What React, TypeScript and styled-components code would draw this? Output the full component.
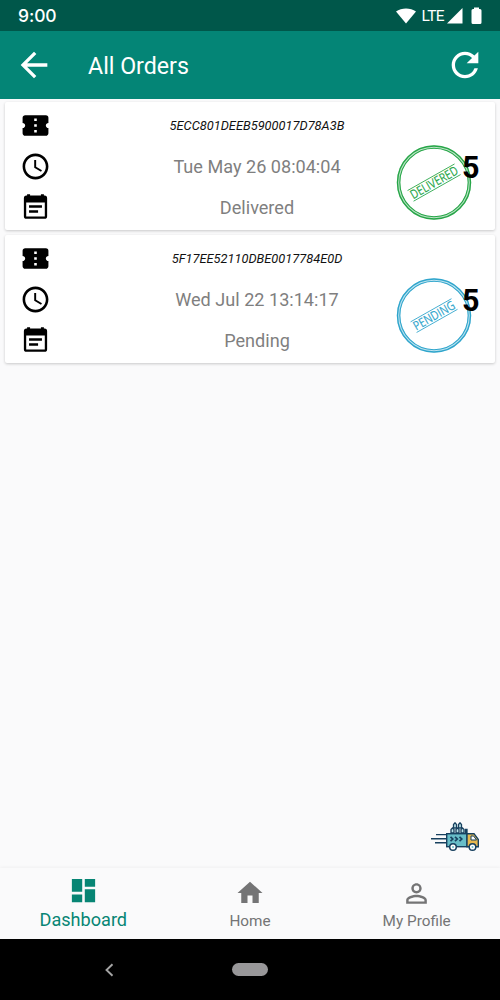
import React from "react";
import styled, { createGlobalStyle } from "styled-components";
import {
  MdArrowBack,
  MdRefresh,
  MdConfirmationNumber,
  MdAccessTime,
  MdDashboard,
  MdHome,
  MdPersonOutline,
} from "react-icons/md";

const GlobalStyle = createGlobalStyle`
  * { box-sizing: border-box; }
  body { margin: 0; background: #fafafc; }
  svg { display: block; flex: none; }
`;

const Screen = styled.div`
  display: flex;
  flex-direction: column;
  width: 500px;
  height: 1000px;
  overflow: hidden;
  background: #fafafb;
  font-family: Roboto, sans-serif;
`;

const StatusBar = styled.div`
  display: flex;
  align-items: center;
  height: 31px;
  flex: none;
  padding: 0 18px;
  background: #00574a;
  color: #fff;
`;

const Clock = styled.span`
  flex: 1;
  font: 500 17.5px/30px Inter, sans-serif;
  letter-spacing: -0.1px;
`;

const Network = styled.span`
  margin: 0 3px 0 5px;
  font-size: 15.5px;
  line-height: 30px;
  letter-spacing: -0.6px;
`;

const AppBar = styled.header`
  display: flex;
  align-items: center;
  height: 68px;
  flex: none;
  padding: 0 15px 0 14px;
  background: #048576;
  color: #fff;
`;

const Title = styled.h1`
  flex: 1;
  margin: 2px 0 0 34px;
  font-size: 23.2px;
  font-weight: 400;
  line-height: 30px;
`;

const Orders = styled.main`
  display: flex;
  flex: 1;
  flex-direction: column;
  gap: 5px;
  padding: 3px 5px;
`;

const Card = styled.article`
  display: grid;
  grid-template-columns: 60px 1fr 122px;
  height: 128px;
  flex: none;
  border-radius: 2px;
  background: #fff;
  box-shadow: 0 1px 3px rgba(0, 0, 0, 0.2);
`;

const IconColumn = styled.div`
  display: flex;
  flex-direction: column;
  align-items: center;
  gap: 10px;
  padding-top: 8px;
  color: #000;
`;

const Details = styled.div`
  display: flex;
  flex-direction: column;
  align-items: center;
  padding: 3px 0 0 76px;
`;

const Line = styled.div<{ $id?: boolean }>`
  height: 41px;
  line-height: 41px;
  white-space: nowrap;
  font-size: ${(p) => (p.$id ? "12.8px" : "18.1px")};
  font-style: ${(p) => (p.$id ? "italic" : "normal")};
  color: ${(p) => (p.$id ? "#111" : "#7f7f7f")};
`;

const StampArea = styled.div`
  position: relative;
  padding: 42px 0 0 23px;
`;

const Quantity = styled.span`
  position: absolute;
  left: 89px;
  top: 48px;
  font-size: 30.5px;
  font-weight: 700;
  line-height: 36px;
  color: #000;
`;

const TruckSlot = styled.div`
  display: flex;
  justify-content: flex-end;
  height: 49px;
  flex: none;
  padding: 3px 19px 0 0;
`;

const NavBar = styled.nav`
  display: grid;
  grid-template-columns: repeat(3, 1fr);
  height: 71px;
  flex: none;
  background: #fafafb;
  box-shadow: 0 -1px 3px rgba(0, 0, 0, 0.045);
`;

const NavItem = styled.div<{ $active?: boolean }>`
  display: flex;
  flex-direction: column;
  align-items: center;
  padding-top: ${(p) => (p.$active ? 7 : 10)}px;
  color: ${(p) => (p.$active ? "#078574" : "#747475")};
  font-size: ${(p) => (p.$active ? 18.1 : 15.3)}px;
`;

const NavLabel = styled.span<{ $active?: boolean }>`
  display: flex;
  align-items: center;
  height: ${(p) => (p.$active ? 28 : 26)}px;
`;

const IconBox = styled.div`
  display: flex;
  align-items: center;
  height: 30px;
`;

const SystemBar = styled.footer`
  display: grid;
  grid-template-columns: 217px 65px 1fr;
  align-items: center;
  justify-items: center;
  height: 61px;
  flex: none;
  background: #000;
`;

const HomePill = styled.div`
  width: 36px;
  height: 13px;
  border-radius: 7px;
  background: #989799;
`;

interface Order {
  id: string;
  date: string;
  status: string;
  color: string;
  half: number;
  quantity: number;
}

const orders: Order[] = [
  { id: "5ECC801DEEB5900017D78A3B", date: "Tue May 26 08:04:04", status: "Delivered", color: "#27a648", half: 27, quantity: 5 },
  { id: "5F17EE52110DBE0017784E0D", date: "Wed Jul 22 13:14:17", status: "Pending", color: "#2fa5cc", half: 23.5, quantity: 5 },
];

const NoteIcon = () => (
  <svg width="31" height="31" viewBox="0 0 24 24" fill="currentColor">
    <path
      fillRule="evenodd"
      d="M5.500 1.800H7.800V2.800H16.200V1.800H18.500V2.800H19Q21 2.800 21 4.800V18.700Q21 20.700 19 20.700H5Q3 20.700 3 18.700V4.800Q3 2.800 5 2.800H5.500ZM4.800 8.100V18.900H19.200V8.100ZM7 10.300H17V12.100H7ZM7 14.200H14V16H7Z"
    />
  </svg>
);

const Stamp = ({ label, color, half }: { label: string; color: string; half: number }) => (
  <svg width="76" height="76" viewBox="-38 -38.500 76 76" fill="none" stroke={color}>
    <circle r="35.500" strokeWidth="3.400" strokeOpacity="0.3" />
    <circle r="36.500" strokeWidth="1.400" />
    <circle r="34.200" strokeWidth="1.100" />
    <g transform="rotate(-29.500)">
      <path d={`M${-half} -6H${half}M${-half} 6.200H${half}`} strokeWidth="0.800" />
      <text
        y="4.500"
        textAnchor="middle"
        textLength={half * 2 - 1}
        lengthAdjust="spacingAndGlyphs"
        fill={color}
        stroke={color}
        strokeWidth="0.150"
        fontFamily="Open Sans, sans-serif"
        fontSize="12.600"
      >
        {label}
      </text>
    </g>
  </svg>
);

const Truck = () => (
  <svg width="50" height="30" viewBox="0 0 50 30">
    <path d="M5 12.600H15M0 16.700H15M4 20.800H15" stroke="#17405f" strokeWidth="1.400" />
    <g fill="#bde3e8" stroke="#17405f" strokeWidth="1.300">
      <path d="M20 11V7.500L21.500 6L23 7.500V11ZM25 11V7.500L26.500 6L28 7.500V11ZM30 11V7.500L31.500 6L33 7.500V11Z" />
      <path d="M22.500 6V2.500L24 .8L25.500 2.500V6ZM27.500 6V2.500L29 .8L30.500 2.500V6Z" />
      <path d="M34.500 11V7.500H36V11Z" fill="#17405f" />
    </g>
    <rect x="15.700" y="11.700" width="20.300" height="13" fill="#67bdc8" stroke="#17405f" strokeWidth="1.400" />
    <path d="M36 11.700H43L47.300 17.500V24.700H36Z" fill="#e7b84f" stroke="#17405f" strokeWidth="1.400" />
    <path d="M40 14H42.600L45.500 18H40Z" fill="#fff" stroke="#17405f" strokeWidth="1" />
    <path d="M19.500 14.800L21.800 17L19.500 19.200M24 14.800L26.300 17L24 19.200M28.500 14.800L30.800 17L28.500 19.200" fill="none" stroke="#17405f" strokeWidth="1.700" />
    <g fill="#fff" stroke="#17405f" strokeWidth="1.500">
      <circle cx="22" cy="25" r="3.300" />
      <circle cx="41.500" cy="25" r="3.300" />
    </g>
    <circle cx="22" cy="25" r="1" fill="#67bdc8" />
    <circle cx="41.500" cy="25" r="1" fill="#67bdc8" />
  </svg>
);

export default function App() {
  return (
    <>
      <GlobalStyle />
      <Screen>
        <StatusBar>
          <Clock>9:00</Clock>
          <svg width="20" height="16" viewBox="0 0 20 16" fill="#fff">
            <path d="M0 3.600C5.500-.6 14.500-.6 20 3.600L10 15.500Z" />
          </svg>
          <Network>LTE</Network>
          <svg width="16" height="16" viewBox="0 0 16 16" fill="#fff">
            <path d="M0 15.500L15.500 0V15.500Z" />
          </svg>
          <svg width="19" height="18" viewBox="1 0 19 18" fill="#fff">
            <path d="M12 .5H17V2H18Q19.500 2 19.500 3.500V15.500Q19.500 17 18 17H11Q9.500 17 9.500 15.500V3.500Q9.500 2 11 2H12Z" />
          </svg>
        </StatusBar>
        <AppBar>
          <MdArrowBack size={40} />
          <Title>All Orders</Title>
          <MdRefresh size={40} />
        </AppBar>
        <Orders>
          {orders.map((o) => (
            <Card key={o.id}>
              <IconColumn>
                <MdConfirmationNumber size={31} />
                <MdAccessTime size={31} />
                <NoteIcon />
              </IconColumn>
              <Details>
                <Line $id>{o.id}</Line>
                <Line>{o.date}</Line>
                <Line>{o.status}</Line>
              </Details>
              <StampArea>
                <Stamp label={o.status.toUpperCase()} color={o.color} half={o.half} />
                <Quantity>{o.quantity}</Quantity>
              </StampArea>
            </Card>
          ))}
        </Orders>
        <TruckSlot>
          <Truck />
        </TruckSlot>
        <NavBar>
          <NavItem $active>
            <IconBox><MdDashboard size={31} /></IconBox>
            <NavLabel $active>Dashboard</NavLabel>
          </NavItem>
          <NavItem>
            <IconBox><MdHome size={30} /></IconBox>
            <NavLabel>Home</NavLabel>
          </NavItem>
          <NavItem>
            <IconBox><MdPersonOutline size={31} /></IconBox>
            <NavLabel>My Profile</NavLabel>
          </NavItem>
        </NavBar>
        <SystemBar>
          <svg width="10" height="14" viewBox="0 0 10 14" fill="none" stroke="#a5a5a5" strokeWidth="1.900">
            <path d="M8.500 1.200L2.500 7L8.500 12.800" />
          </svg>
          <HomePill />
        </SystemBar>
      </Screen>
    </>
  );
}
